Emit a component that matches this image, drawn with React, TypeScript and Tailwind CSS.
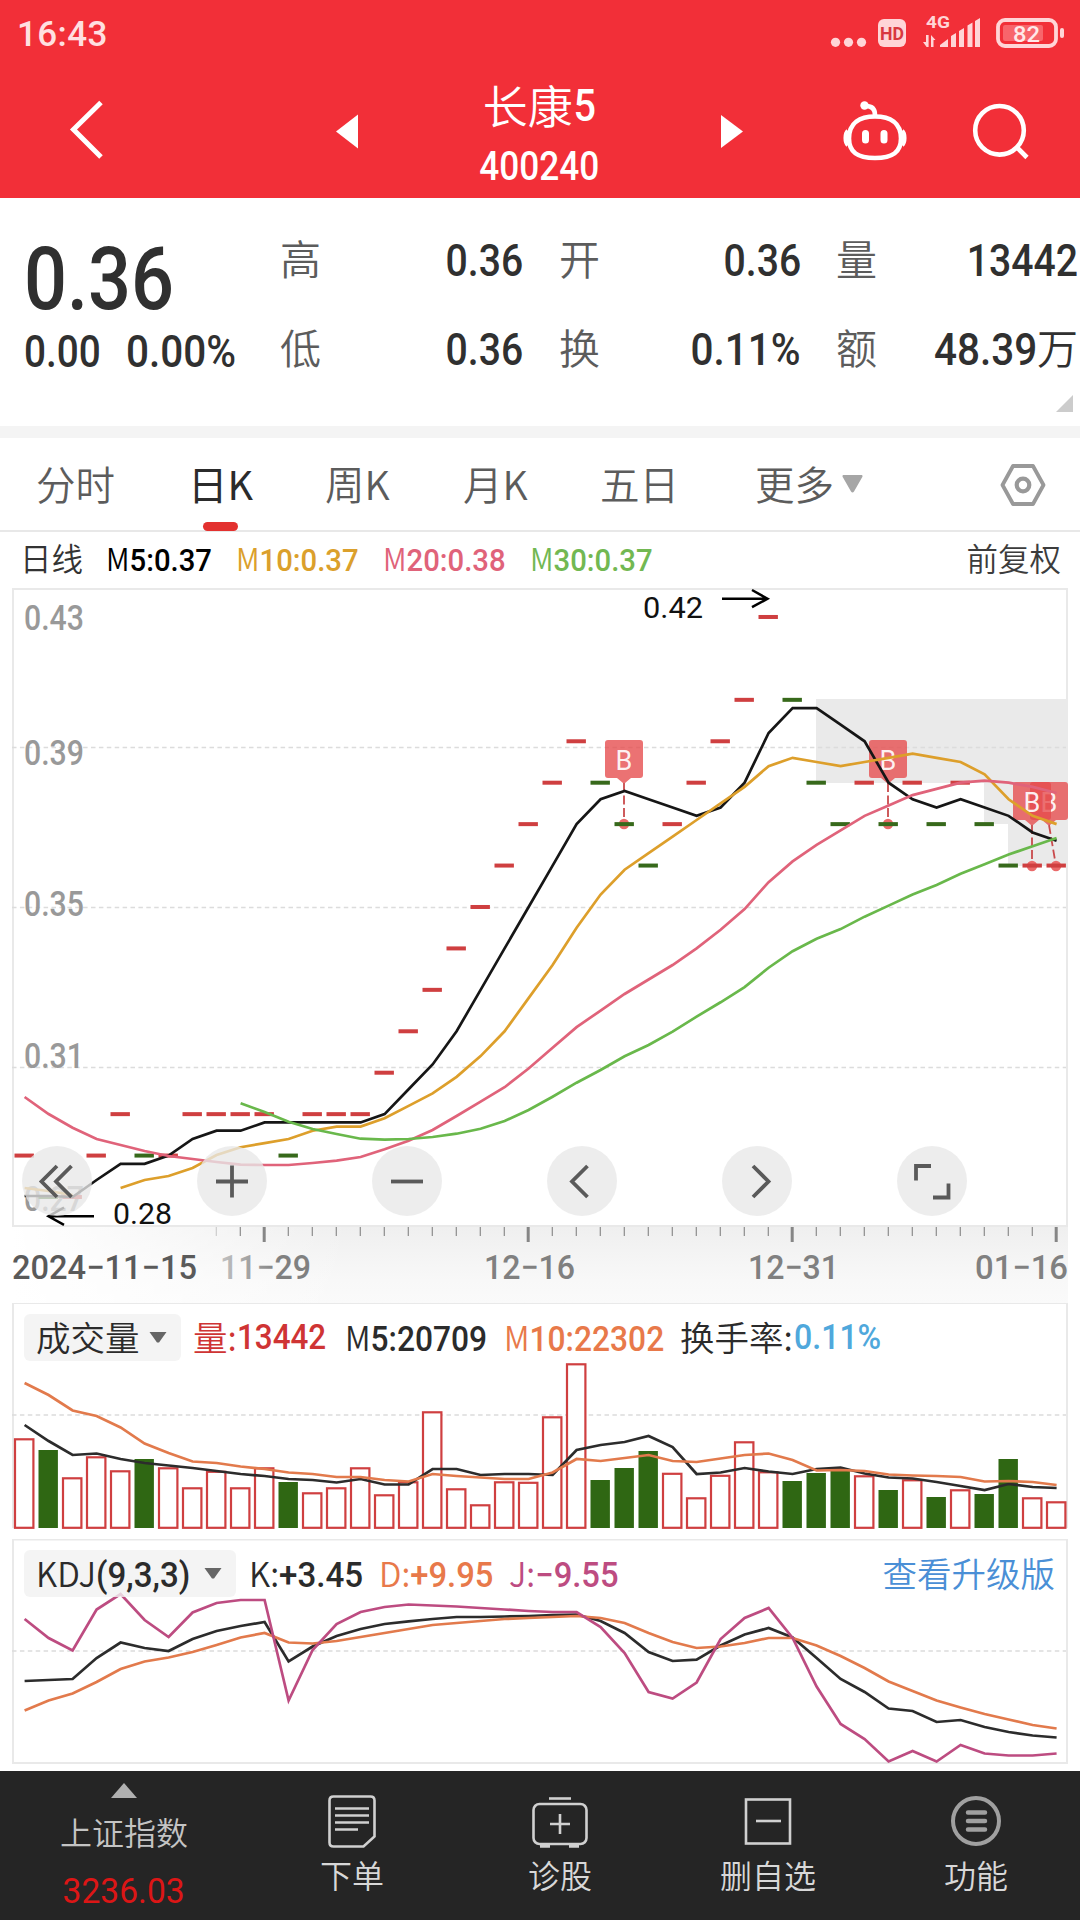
import type { ReactNode } from 'react'
import clsx from 'clsx'

const CJK = "font-['Noto_Sans_CJK_SC',sans-serif]"
const DIGITS = "inline-block whitespace-nowrap font-['Roboto','Noto_Sans_CJK_SC',sans-serif] font-medium"
const NUM = "inline-block whitespace-nowrap font-['Roboto','Noto_Sans_CJK_SC',sans-serif] font-medium scale-x-[0.88]"

const RED = '#cf3f40'
const GREEN = '#2f6713'

// Closing prices in cents, one per trading day
const closes = [
  29, 28, 28, 29, 30, 29, 29, 30, 30, 30, 30, 29, 30, 30, 30, 31, 32, 33, 34, 35, 36, 37, 38, 39, 38, 37, 36, 37, 38,
  39, 40, 42, 40, 38, 37, 38, 37, 38, 37, 38, 37, 36, 36, 36,
]
const falling = new Set([1, 5, 11, 24, 25, 26, 32, 33, 34, 36, 38, 40, 41])

// Top edge of each volume bar
const volume = [
  1439, 1450, 1478, 1457, 1471, 1459, 1468, 1488, 1471.5, 1488, 1468, 1482, 1493, 1488, 1468, 1495, 1482, 1412, 1489,
  1505, 1482, 1482.5, 1417, 1364, 1480, 1468, 1451, 1473.5, 1498, 1475.5, 1442, 1472, 1481, 1473, 1471, 1476, 1490,
  1480, 1497, 1490, 1494, 1459, 1498, 1502,
]
const volM5 = [
  1425, 1441, 1455, 1453.5, 1459, 1463, 1465.5, 1468, 1471, 1474, 1476, 1479, 1480, 1482.5, 1479, 1484.5, 1484.5, 1469,
  1469, 1475, 1474, 1474, 1475, 1450, 1445, 1442, 1436, 1447, 1474, 1472.5, 1468, 1471.5, 1474, 1469, 1467.5, 1473.5,
  1477.5, 1478.5, 1482, 1486, 1490, 1484, 1487, 1488,
]
const volM10 = [
  1383, 1395, 1410.5, 1416, 1427.5, 1443.5, 1453, 1461.5, 1463, 1466.5, 1469, 1472.5, 1474, 1477, 1477, 1480, 1481.5,
  1474, 1476, 1477.5, 1479, 1479, 1472.5, 1459, 1461, 1458, 1455, 1461, 1462, 1458.5, 1455, 1453.5, 1460, 1470.5, 1470,
  1471, 1474.5, 1475.5, 1476, 1477, 1481.5, 1481, 1482, 1485,
]
const kLine = [
  1681, 1680, 1679, 1658, 1642.5, 1648, 1651, 1639, 1631, 1626, 1622, 1661.5, 1646.5, 1636, 1629, 1624, 1621.3, 1619,
  1617, 1617, 1616.5, 1616, 1615, 1614.5, 1621, 1633, 1652, 1661, 1659.7, 1645.5, 1634.5, 1628, 1637.5, 1658, 1679,
  1692, 1708.5, 1711, 1722, 1720, 1727, 1732, 1735.5, 1737.5,
]
const dLine = [
  1710.5, 1700.5, 1693.5, 1682, 1669, 1661.5, 1657.5, 1652, 1645, 1637.5, 1633, 1642.5, 1643.5, 1641, 1637, 1633, 1629,
  1625, 1623, 1621, 1619, 1618, 1617, 1616, 1618, 1623, 1633, 1642, 1648, 1646.5, 1643, 1638, 1638, 1645.5, 1656, 1668,
  1681.5, 1691, 1700.5, 1707.5, 1714, 1719.5, 1725, 1728.5,
]
const jLine = [
  1619, 1638, 1650.5, 1609.5, 1594, 1620, 1637, 1612.5, 1603, 1600, 1600, 1700.5, 1650, 1624, 1612, 1607, 1604.5,
  1605.5, 1606.5, 1608, 1609.5, 1611, 1612, 1612, 1627, 1653, 1692, 1698.5, 1682.5, 1639, 1618, 1608, 1638, 1686.5,
  1724, 1739, 1761.5, 1751, 1761.5, 1745, 1753.5, 1755.5, 1755.5, 1753.5,
]

const px = (i: number) => 24.2 + i * 24
const py = (cents: number) => 1197 - (cents - 28) * 41.43

function average(days: number, seed: number[]) {
  return closes.map((_, i) => {
    if (i < seed.length) return seed[i]
    const part = closes.slice(i - days + 1, i + 1)
    return py(part.reduce((a, b) => a + b, 0) / days)
  })
}

const ma5 = average(5, [1196, 1196, 1197, 1180])
const ma10 = average(10, [1188, 1191, 1195, 1195, 1188, 1180, 1176, 1168, 1155])
const ma20 = average(20, [
  1097, 1114, 1127.7, 1139, 1145, 1151, 1156, 1159, 1162, 1164.7, 1165, 1165, 1163, 1160.7, 1157, 1149.3, 1140.7, 1130,
  1116,
])
const ma30 = average(30, [
  0, 0, 0, 0, 0, 0, 0, 0, 0, 1103.3, 1112, 1121.7, 1129, 1134, 1138.7, 1139.7, 1139, 1137, 1133.7, 1128.7, 1121, 1110,
  1096.7, 1082.7, 1070, 1056.3, 1045, 1031.7, 1016.7,
])

function Line({ ys, color, from = 0, to = 43 }: { ys: number[]; color: string; from?: number; to?: number }) {
  const points = ys
    .slice(from, to + 1)
    .map((y, i) => `${px(i + from) + 0.4},${y}`)
    .join(' ')
  return <polyline points={points} fill="none" stroke={color} strokeWidth="2.7" />
}

function GridLine({ y }: { y: number }) {
  return <line x1="12" x2="1066" y1={y} y2={y} stroke="#dcdcdc" strokeWidth="1.3" strokeDasharray="4.5 3.4" />
}

function Label(props: { x: number; y: number; w: number; size: number; fill: string; weight?: number; children: ReactNode }) {
  return (
    <text
      x={props.x}
      y={props.y}
      fontFamily="Roboto, sans-serif"
      fontSize={props.size}
      fontWeight={props.weight ?? 500}
      fill={props.fill}
      textLength={props.w}
      lengthAdjust="spacingAndGlyphs"
    >
      {props.children}
    </text>
  )
}

// Thin prefix letter in front of an indicator value
function Letter({ children }: { children: ReactNode }) {
  return <span className="font-['Noto_Sans_CJK_SC',sans-serif] font-[350]">{children}</span>
}

function StatusBar() {
  return (
    <div className="flex h-[68px] items-center justify-between pl-[17px] pr-[14px] text-[#ffe0e1]">
      <span className="font-['Roboto',sans-serif] text-[35px] font-medium leading-none tracking-[0.4px]">16:43</span>
      <svg width="238" height="40" viewBox="828 14 238 40" fill="#ffd5d7">
        <circle cx="835.5" cy="42.3" r="4.6" />
        <circle cx="848.5" cy="42.3" r="4.6" />
        <circle cx="861.5" cy="42.3" r="4.6" />
        <rect x="878" y="19" width="28" height="28" rx="6" />
        <text x="880" y="40" fontFamily="Roboto" fontWeight="700" fontSize="18.5" fill="#d8383f" textLength="24" lengthAdjust="spacingAndGlyphs">HD</text>
        <text x="926" y="28" fontFamily="Roboto" fontWeight="700" fontSize="16" textLength="24" lengthAdjust="spacingAndGlyphs">4G</text>
        <path d="M926 35h2.6v12h-2l-3.6-5h3zM931 47V35l4.5 5h-2v7z" />
        <path d="M940 47v-2l8-6v8zM951 47V36l5-3v14zM959 47V31l5-3v19zM967.5 47V25.500l5-3V47zM975 47V21l5-3v29z" />
        <rect x="998" y="20" width="58" height="26" rx="7" fill="none" stroke="#ffd5d7" strokeWidth="3.8" />
        <rect x="1003" y="25" width="40" height="16" rx="2" fill="#f8656b" />
        <rect x="1060" y="28" width="4" height="10" rx="2" />
        <text x="1013" y="41.500" fontFamily="Roboto" fontWeight="500" fontSize="22.500" fill="#ffe8e9" textLength="27" lengthAdjust="spacingAndGlyphs">82</text>
      </svg>
    </div>
  )
}

function Header() {
  return (
    <header className="h-[198px] bg-[#f22f38]">
      <StatusBar />
      <div className="flex h-[130px] items-start text-white">
        <svg className="ml-[60px] mt-[27px]" width="60" height="70" viewBox="60 95 60 70" fill="none">
          <path d="M101 102.500 73.500 129.500 101 157" stroke="#fff" strokeWidth="5" />
        </svg>
        <svg className="ml-[210px] mt-[42px]" width="34" height="44" viewBox="330 110 34 44">
          <path d="M336 131.500 358 114.500v34z" fill="#fff" />
        </svg>
        <div className="flex w-[351px] flex-col items-center">
          <div className={clsx(CJK, 'mt-[11px] flex h-[50px] items-center text-[45px] font-[350] leading-none')}>
            长康
            <span className={clsx(NUM, '-ml-[1px] -mr-[1px] mt-[3px] text-[45px]')}>5</span>
          </div>
          <div className={clsx(NUM, 'mt-[18px] text-[40px] leading-[40px]')}>400240</div>
        </div>
        <svg className="mt-[42px]" width="34" height="44" viewBox="715 110 34 44">
          <path d="M743 131.500 721 115v33z" fill="#fff" />
        </svg>
        <svg className="ml-[87px] mt-[28px]" width="76" height="70" viewBox="836 96 76 70" fill="none" stroke="#fff" strokeWidth="4.600">
          <path d="M875 116.500c15 0 26 6 26 22 0 14-9 19.500-26 19.500s-26-5.500-26-19.500c0-16 11-22 26-22z" />
          <path d="M875 115c0-6-3-9-9-9" />
          <circle cx="864.500" cy="105.500" r="4.200" fill="#fff" stroke="none" />
          <path d="M848 131c-3 3-3 11 0 14M902 131c3 3 3 11 0 14" />
          <path d="M865.500 133.500v6.500M884 133.500v6.500" strokeWidth="7" strokeLinecap="round" />
        </svg>
        <svg className="ml-[53px] mt-[28px]" width="76" height="70" viewBox="965 96 76 70" fill="none" stroke="#fff" strokeWidth="4.600">
          <circle cx="999.500" cy="130.300" r="24.300" />
          <path d="m1017 147.500 10 10" />
        </svg>
      </div>
    </header>
  )
}

function Stat({ label, value }: { label: string; value: string }) {
  return (
    <div className="flex h-[89px] items-center justify-between">
      <span className={clsx(CJK, 'pb-[6px] text-[41px] font-[350] leading-none text-[#5c5c5c]')}>{label}</span>
      <span className={clsx(DIGITS, 'origin-right text-[44px] leading-none', value.endsWith('%') ? 'scale-x-[0.92]' : 'scale-x-[0.89]')}>{value}</span>
    </div>
  )
}

function Quote() {
  return (
    <section className="relative flex h-[228px] pl-[24px] pt-[18px] text-[#303030]">
      <div className="w-[256px]">
        <div className={clsx(DIGITS, 'mt-[10px] h-[106px] origin-left scale-x-[0.86] text-[88px] leading-[106px]')}>0.36</div>
        <div className="flex h-[40px] items-center text-[44px] leading-none">
          <span className={clsx(NUM, 'w-[102px] origin-left')}>0.00</span>
          <span className={clsx(DIGITS, 'origin-left scale-x-[0.92]')}>0.00%</span>
        </div>
      </div>
      <div className="w-[243px]">
        <Stat label="高" value="0.36" />
        <Stat label="低" value="0.36" />
      </div>
      <div className="ml-[36px] w-[242px]">
        <Stat label="开" value="0.36" />
        <Stat label="换" value="0.11%" />
      </div>
      <div className="ml-[35px] w-[242px]">
        <Stat label="量" value="13442" />
        <div className="flex h-[89px] items-center">
          <span className={clsx(CJK, 'pb-[6px] text-[41px] font-[350] leading-none text-[#5c5c5c]')}>额</span>
          <span className={clsx(DIGITS, 'ml-auto origin-right scale-x-[0.92] text-[44px] leading-none')}>48.39</span>
          <span className={clsx(CJK, 'pb-[6px] text-[41px] font-[350] leading-none')}>万</span>
        </div>
      </div>
      <svg className="absolute bottom-[14px] right-[7px]" width="17" height="17" viewBox="0 0 17 17">
        <path d="M17 0v17H0z" fill="#ccc" />
      </svg>
    </section>
  )
}

function Tabs() {
  return (
    <nav className={clsx(CJK, 'relative flex h-[94px] items-center border-b-2 border-[#e8e8e8] text-[39.500px] font-[350] leading-none text-[#5c5c5c]')}>
      <span className="ml-[36px] w-[152px] pb-[2px]">分时</span>
      <span className="w-[137px] pb-[2px] font-normal text-[#2b2b2b]">日K</span>
      <span className="w-[138px] pb-[2px]">周K</span>
      <span className="w-[137px] pb-[2px]">月K</span>
      <span className="w-[155px] pb-[2px]">五日</span>
      <span className="pb-[2px]">更多</span>
      <svg className="ml-[8px]" width="21" height="18" viewBox="0 0 21 18">
        <path d="M1 0h19q1 1 0 2.500L12 16.500q-1.500 2-3 0L1 2.500Q0 1 1 0z" fill="#a6a6a6" />
      </svg>
      <svg className="ml-[134px]" width="52" height="48" viewBox="997 460 52 48" fill="none" stroke="#999" strokeWidth="3.800" strokeLinejoin="round">
        <path d="M1013 466h20l10.500 19-10.500 19h-20l-10.500-19z" />
        <circle cx="1023" cy="485" r="6.300" strokeWidth="4.200" />
      </svg>
      <span className="absolute -bottom-[1px] left-[203px] h-[9px] w-[35px] rounded-full bg-[#e3312f]" />
    </nav>
  )
}

function Legend() {
  return (
    <div className={clsx(CJK, 'flex h-[56px] items-center pl-[20px] text-[31.500px] font-[350] leading-none text-[#333]')}>
      <span className="w-[86px] pb-[4px]">日线</span>
      <span className={clsx(DIGITS, 'w-[130px] origin-left scale-x-[0.93] pb-[2px] text-black')}>
        <Letter>M</Letter>5:0.37
      </span>
      <span className={clsx(DIGITS, 'w-[147px] origin-left scale-x-[0.93] pb-[2px] text-[#dba02c]')}>
        <Letter>M</Letter>10:0.37
      </span>
      <span className={clsx(DIGITS, 'w-[147px] origin-left scale-x-[0.93] pb-[2px] text-[#e0637a]')}>
        <Letter>M</Letter>20:0.38
      </span>
      <span className={clsx(DIGITS, 'origin-left scale-x-[0.93] pb-[2px] text-[#72b852]')}>
        <Letter>M</Letter>30:0.37
      </span>
      <span className="ml-auto mr-[19px] pb-[4px] text-[#3c3c3c]">前复权</span>
    </div>
  )
}

function Marker({ x, y, foot }: { x: number; y: number; foot: number }) {
  const end = y + 84
  return (
    <g>
      <path
        d={`M${x - 16} ${y}h32q3 0 3 3v32q0 3-3 3h-9l-6 5h-2l-6-5h-9q-3 0-3-3v-32q0-3 3-3z`}
        fill="#e64a4c"
        fillOpacity="0.78"
      />
      <text x={x} y={y + 30} textAnchor="middle" fontFamily="Roboto" fontSize="27" fill="#fff" fillOpacity="0.92">
        B
      </text>
      <path d={`M${x} ${y + 43}L${foot} ${end}`} stroke="#c94a4c" strokeWidth="1.800" strokeDasharray="9 3.500" />
      <circle cx={foot} cy={end} r="5.200" fill="#ea6a6a" />
    </g>
  )
}

function RoundButton({ x, children }: { x: number; children: ReactNode }) {
  return (
    <g>
      <circle cx={x} cy="1181" r="35" fill="#e8e8e8" fillOpacity="0.78" />
      <g transform={`translate(${x} 1181.500)`} fill="none" stroke="#5a5a5a" strokeWidth="3.800">
        {children}
      </g>
    </g>
  )
}

function PriceChart() {
  return (
    <svg className="block" width="1080" height="715" viewBox="0 588 1080 715">
      <defs>
        <linearGradient id="axis" x1="0" y1="0" x2="0" y2="1">
          <stop offset="0" stopColor="#efefef" />
          <stop offset="0.700" stopColor="#f8f8f8" />
          <stop offset="1" stopColor="#fafafa" />
        </linearGradient>
        <linearGradient id="fade" x1="0" y1="0" x2="1" y2="0">
          <stop offset="0" stopColor="#fff" />
          <stop offset="1" stopColor="#fff" stopOpacity="0" />
        </linearGradient>
        <linearGradient id="dateFade" gradientUnits="userSpaceOnUse" x1="215" y1="0" x2="280" y2="0">
          <stop offset="0" stopColor="#c8c8c8" />
          <stop offset="1" stopColor="#808080" />
        </linearGradient>
      </defs>
      <rect x="12" y="1227" width="1056" height="76" fill="url(#axis)" />
      <rect x="12" y="1227" width="340" height="76" fill="url(#fade)" />
      <rect x="13" y="589" width="1054" height="637" fill="none" stroke="#e9e9e9" strokeWidth="2" />
      <rect x="816" y="699" width="252" height="84" fill="#eaeaea" />
      <rect x="984" y="783" width="84" height="41" fill="#eaeaea" />
      <rect x="1008" y="824" width="60" height="42" fill="#eaeaea" />
      <GridLine y={747.5} />
      <GridLine y={907.5} />
      <GridLine y={1067.5} />

      <Label x={24} y={630} w={60} size={35} fill="#999">0.43</Label>
      <Label x={24} y={765} w={60} size={35} fill="#999">0.39</Label>
      <Label x={24} y={916} w={60} size={35} fill="#999">0.35</Label>
      <Label x={24} y={1067.5} w={60} size={35} fill="#999">0.31</Label>
      <Label x={24} y={1210.5} w={60} size={35} fill="#999">0.27</Label>

      <Marker x={624} y={740} foot={624} />
      <Marker x={888} y={740} foot={888} />
      <Marker x={1049} y={782} foot={1056} />
      <Marker x={1032} y={782} foot={1032} />

      {closes.map((c, i) => (
        <rect key={i} x={px(i) - 9.7} y={py(c) - 2} width="19.400" height="4" fill={falling.has(i) ? '#37691b' : RED} />
      ))}

      <Line ys={ma5} color="#161616" />
      <Line ys={ma10} color="#dd9f2b" to={2} />
      <Line ys={ma10} color="#dd9f2b" from={4} />
      <Line ys={ma20} color="#e0637a" />
      <Line ys={ma30} color="#69b84b" from={9} />

      <Label x={643} y={618} w={60} size={30} weight={400} fill="#111">0.42</Label>
      <path d="M722 598.700h45M752 590l15.500 8.700-15.500 8.500" fill="none" stroke="#000" strokeWidth="2.500" />
      <Label x={113} y={1224} w={59} size={30} weight={400} fill="#111">0.28</Label>
      <path d="M94 1216.300H49M64 1207.500l-15.500 8.800 15.500 8.500" fill="none" stroke="#000" strokeWidth="2.500" />

      <RoundButton x={57}>
        <path d="M0-15.500-15.500 0 0 15.500M14.500-15.500-1 0l15.500 15.500" />
      </RoundButton>
      <RoundButton x={232}>
        <path d="M-16 0h32M0-16v32" />
      </RoundButton>
      <RoundButton x={407}>
        <path d="M-16 0h32" />
      </RoundButton>
      <RoundButton x={582}>
        <path d="M5.500-15.500-10 0 5.500 15.500" />
      </RoundButton>
      <RoundButton x={757}>
        <path d="M-4-15.500 11.500 0-4 15.500" />
      </RoundButton>
      <RoundButton x={932}>
        <path d="M-16-1v-14.500H-1M16.500 2v14H1" />
      </RoundButton>

      {closes.map((_, i) => {
        if (i < 8) return null
        const major = i % 11 === 10
        return (
          <rect
            key={i}
            x={px(i) - (major ? 1.5 : 0.5)}
            y="1227"
            width={major ? 3 : 1.2}
            height={major ? 15 : 9}
            fill={major ? '#868686' : i === 8 ? '#ccc' : '#8c8c8c'}
          />
        )
      })}
      <Label x={12} y={1279} w={185} size={34} fill="#5a5a5a">2024−11−15</Label>
      <Label x={220} y={1279} w={91} size={34} fill="url(#dateFade)">11−29</Label>
      <Label x={484} y={1279} w={91} size={34} fill="#808080">12−16</Label>
      <Label x={748} y={1279} w={91} size={34} fill="#808080">12−31</Label>
      <Label x={975} y={1279} w={93} size={34} fill="#808080">01−16</Label>
    </svg>
  )
}

function Picker({ children, className }: { children: ReactNode; className: string }) {
  return (
    <div className={clsx('flex h-[47px] items-center justify-between rounded-md bg-[#f1f1f1]/80 pl-[12px] pr-[14px]', className)}>
      {children}
      <svg width="18" height="11" viewBox="0 0 18 11">
        <path d="M.5 0h17L10 10.500H8z" fill="#666" />
      </svg>
    </div>
  )
}

function VolumePanel() {
  return (
    <section className="grid h-[236px]">
      <svg className="col-start-1 row-start-1" width="1080" height="236" viewBox="0 1303 1080 236">
        <path d="M13 1528v-225h1054v225" fill="none" stroke="#e9e9e9" strokeWidth="2" />
        <GridLine y={1415} />
        {volume.map((top, i) =>
          falling.has(i) ? (
            <rect key={i} x={px(i) - 9.7} y={top} width="19.400" height={1528 - top} fill={GREEN} />
          ) : (
            <rect key={i} x={px(i) - 9.2} y={top + 0.3} width="18.400" height={1527.5 - top} fill="#fff" stroke={RED} strokeWidth="2.200" />
          ),
        )}
        <Line ys={volM5} color="#2c2c2c" />
        <Line ys={volM10} color="#e27a4c" />
      </svg>
      <div className={clsx(CJK, 'col-start-1 row-start-1 flex h-[47px] translate-y-[11px] items-center pl-[24px] text-[34.500px] font-[350] leading-none text-[#2b2b2b]')}>
        <Picker className="w-[157px]">
          <span className="pb-[3px]">成交量</span>
        </Picker>
        <span className="ml-[12px] flex w-[152px] items-center text-[#cf3434]">
          <span className="pb-[3px]">量:</span>
          <span className={clsx(DIGITS, 'origin-left scale-x-[0.91]')}>13442</span>
        </span>
        <span className={clsx(DIGITS, 'w-[159px] origin-left scale-x-[0.92]')}>
          <Letter>M</Letter>5:20709
        </span>
        <span className={clsx(DIGITS, 'w-[176px] origin-left scale-x-[0.92] text-[#e8794a]')}>
          <Letter>M</Letter>10:22302
        </span>
        <span className="w-[114px] pb-[3px]">换手率:</span>
        <span className={clsx(DIGITS, 'origin-left scale-x-[0.93] text-[#4fa8dc]')}>0.11%</span>
      </div>
    </section>
  )
}

function KdjPanel() {
  return (
    <section className="grid h-[232px]">
      <svg className="col-start-1 row-start-1" width="1080" height="232" viewBox="0 1539 1080 232">
        <rect x="13" y="1539.500" width="1054" height="223.500" fill="none" stroke="#e9e9e9" strokeWidth="2" />
        <GridLine y={1651} />
        <Line ys={kLine} color="#2c2c2c" />
        <Line ys={dLine} color="#e27a4c" />
        <Line ys={jLine} color="#bd4c81" />
      </svg>
      <div className={clsx(CJK, 'col-start-1 row-start-1 flex h-[47px] translate-y-[11px] items-center pl-[24px] text-[34.500px] font-[350] leading-none text-[#2b2b2b]')}>
        <Picker className="w-[212px]">
          <span className={clsx(DIGITS, 'w-[160px] origin-left scale-x-[0.96]')}>
            <Letter>KDJ</Letter>(9,3,3)
          </span>
        </Picker>
        <span className={clsx(DIGITS, 'ml-[13px] w-[130px] origin-left scale-x-[0.96]')}>
          <Letter>K:</Letter>+3.45
        </span>
        <span className={clsx(DIGITS, 'w-[130px] origin-left scale-x-[0.95] text-[#e8794a]')}>
          <Letter>D:</Letter>+9.95
        </span>
        <span className={clsx(DIGITS, 'origin-left scale-x-[0.95] text-[#bd4c81]')}>
          <Letter>J:</Letter>−9.55
        </span>
        <span className="ml-auto mr-[25px] pb-[3px] text-[#4a8fd6]">查看升级版</span>
      </div>
    </section>
  )
}

function NavItem({ label, children }: { label: string; children: ReactNode }) {
  return (
    <div className="flex flex-1 flex-col items-center pt-[20px]">
      <svg width="64" height="60" viewBox="0 0 64 60" fill="none" stroke="#d0d0d0" strokeWidth="2.600">
        {children}
      </svg>
      <span className="mt-[7px] leading-none">{label}</span>
    </div>
  )
}

function BottomNav() {
  return (
    <footer className={clsx(CJK, 'flex h-[149px] bg-[#252525] text-[32px] font-[350] text-[#d8d8d8]')}>
      <div className="flex w-[248px] flex-col items-center text-[#c4c4c4]">
        <svg className="mt-[12px]" width="26" height="15" viewBox="0 0 26 15">
          <path d="M13 0 26 15H0z" fill="#b0b0b0" />
        </svg>
        <span className="mt-[17px] leading-none">上证指数</span>
        <span className="mt-[27px] scale-x-[0.96] font-['Roboto',sans-serif] text-[35px] font-normal leading-[36px] text-[#dc1616]">3236.03</span>
      </div>
      <NavItem label="下单">
        <path d="M13.500 5.500h37q4 0 4 4v36l-11 10h-30q-4 0-4-4v-42q0-4 4-4z" />
        <path d="M15 17.500h34M15 24.500h34M15 31.500h34M15 38.500h23" />
      </NavItem>
      <NavItem label="诊股">
        <path d="M21 7.500h22" />
        <rect x="5.500" y="13" width="53" height="40" rx="6" />
        <path d="M22 33h20M32 23v20" />
        <path d="M12 55h10M41 55h10" strokeWidth="3.500" />
      </NavItem>
      <NavItem label="删自选">
        <rect x="10" y="8.500" width="44" height="44" />
        <path d="M20 30h25" />
      </NavItem>
      <NavItem label="功能">
        <circle cx="32" cy="30" r="23" stroke="#a0a0a0" strokeWidth="4" />
        <path d="M24 21.500h17M24 30h17M24 38.500h17" stroke="#a0a0a0" strokeWidth="4.500" strokeLinecap="round" />
      </NavItem>
    </footer>
  )
}

export default function App() {
  return (
    <div className="flex h-[1920px] w-[1080px] flex-col overflow-hidden bg-white">
      <Header />
      <Quote />
      <div className="h-[12px] bg-[#f4f4f4]" />
      <Tabs />
      <Legend />
      <PriceChart />
      <VolumePanel />
      <KdjPanel />
      <BottomNav />
    </div>
  )
}
